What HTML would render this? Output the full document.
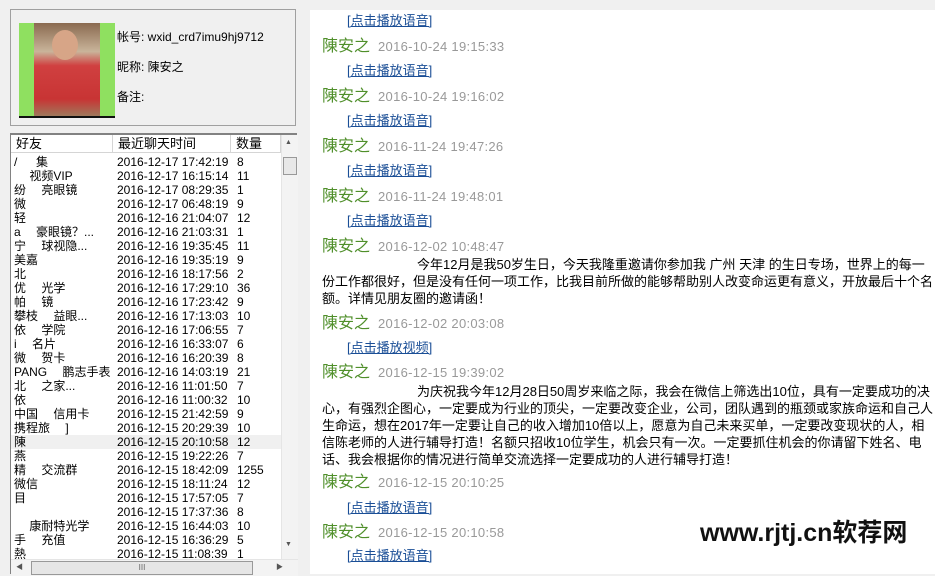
<!DOCTYPE html>
<html><head><meta charset="utf-8"><style>
*{margin:0;padding:0;box-sizing:border-box}
body{width:935px;height:574px;background:#f0f0f0;position:relative;overflow:hidden;font-family:"Liberation Sans","SimSun","Noto Sans CJK SC",sans-serif;font-size:12px;color:#000}
.a{position:absolute;white-space:nowrap}
.box{position:absolute;left:10px;top:9px;width:286px;height:117px;border:1px solid #a0a0a0;background:#f0f0f0}
.list{position:absolute;left:10px;top:133px;width:287px;height:441px;background:#fff;border-top:2px solid #828282;border-left:1px solid #828282}
.hdr{position:absolute;top:0;height:18px;border-right:1px solid #d5d5d5;border-bottom:1px solid #d5d5d5;background:#fff;font-size:13px;padding-left:5px;line-height:18px}
.row{position:absolute;left:0;width:270px;height:14px;font-size:12px;line-height:14px}
.row span{position:absolute}
.right{position:absolute;left:310px;top:10px;width:625px;height:564px;background:#fff;overflow:hidden}
.lk{position:absolute;left:37px;color:#1a4e96;text-decoration:underline;font-size:13px;white-space:nowrap}
.nm{position:absolute;left:12px;color:#4f8f2a;font-size:16px;white-space:nowrap}
.nm span{color:#999;font-size:13px;margin-left:8px;letter-spacing:.3px}
.tx{position:absolute;left:12px;width:614px;font-size:13px;line-height:17px;color:#000;text-indent:95px;word-break:break-all}
</style></head><body>
<div class="box"></div>
<div class="a" style="left:19px;top:23px;width:96px;height:95px;background:#8fe060"></div>
<div class="a" style="left:34px;top:23px;width:66px;height:95px;background:linear-gradient(180deg,#8a6a50 0%,#c9b49a 30%,#d04040 45%,#c83434 80%,#9a8060 100%)"></div>
<div class="a" style="left:52px;top:30px;width:26px;height:30px;border-radius:50%;background:#d7a587"></div>
<div class="a" style="left:19px;top:116px;width:96px;height:2px;background:#111"></div>
<div class="a" style="left:117px;top:28px;font-size:12px">帐号: wxid_crd7imu9hj9712</div>
<div class="a" style="left:117px;top:58px;font-size:12px">昵称: 陳安之</div>
<div class="a" style="left:117px;top:88px;font-size:12px">备注:</div>

<div class="list">
<div class="hdr" style="left:0;width:102px">好友</div>
<div class="hdr" style="left:102px;width:118px">最近聊天时间</div>
<div class="hdr" style="left:220px;width:50px">数量</div>
<div id="rows"></div>
<div class="a" style="left:270px;top:0;width:17px;height:424px;background:#f3f3f3;border-left:1px solid #e5e5e5"></div>
<div class="a" style="left:274px;top:4px;font-size:7px;color:#555">▲</div>
<div class="a" style="left:272px;top:22px;width:14px;height:18px;background:#e8e8e8;border:1px solid #999"></div>
<div class="a" style="left:274px;top:406px;font-size:7px;color:#555">▼</div>
<div class="a" style="left:0;top:424px;width:287px;height:17px;background:#f3f3f3;border-top:1px solid #e5e5e5"></div>
<div class="a" style="left:5px;top:427px;font-size:7px;color:#555">◀</div>
<div class="a" style="left:20px;top:426px;width:222px;height:14px;background:#e6e6e6;border:1px solid #999;text-align:center;font-size:8px;color:#666;line-height:12px">III</div>
<div class="a" style="left:265px;top:427px;font-size:7px;color:#555">▶</div>
</div>

<div class="right">
<div class="lk" style="top:0">[点击播放语音]</div>
<div class="nm" style="top:22px">陳安之<span>2016-10-24 19:15:33</span></div>
<div class="lk" style="top:50px">[点击播放语音]</div>
<div class="nm" style="top:72px">陳安之<span>2016-10-24 19:16:02</span></div>
<div class="lk" style="top:100px">[点击播放语音]</div>
<div class="nm" style="top:122px">陳安之<span>2016-11-24 19:47:26</span></div>
<div class="lk" style="top:150px">[点击播放语音]</div>
<div class="nm" style="top:172px">陳安之<span>2016-11-24 19:48:01</span></div>
<div class="lk" style="top:200px">[点击播放语音]</div>
<div class="nm" style="top:222px">陳安之<span>2016-12-02 10:48:47</span></div>
<div class="tx" style="top:246px">今年12月是我50岁生日，今天我隆重邀请你参加我 广州 天津 的生日专场，世界上的每一份工作都很好，但是没有任何一项工作，比我目前所做的能够帮助别人改变命运更有意义，开放最后十个名额。详情见朋友圈的邀请函！</div>
<div class="nm" style="top:299px">陳安之<span>2016-12-02 20:03:08</span></div>
<div class="lk" style="top:327px">[点击播放视频]</div>
<div class="nm" style="top:348px">陳安之<span>2016-12-15 19:39:02</span></div>
<div class="tx" style="top:373px">为庆祝我今年12月28日50周岁来临之际，我会在微信上筛选出10位，具有一定要成功的决心，有强烈企图心，一定要成为行业的顶尖，一定要改变企业，公司，团队遇到的瓶颈或家族命运和自己人生命运，想在2017年一定要让自己的收入增加10倍以上，愿意为自己未来买单，一定要改变现状的人，相信陈老师的人进行辅导打造！名额只招收10位学生，机会只有一次。一定要抓住机会的你请留下姓名、电话、我会根据你的情况进行简单交流选择一定要成功的人进行辅导打造！</div>
<div class="nm" style="top:458px">陳安之<span>2016-12-15 20:10:25</span></div>
<div class="lk" style="top:487px">[点击播放语音]</div>
<div class="nm" style="top:508px">陳安之<span>2016-12-15 20:10:58</span></div>
<div class="lk" style="top:535px">[点击播放语音]</div>
<div class="a" style="left:390px;top:503px;font-size:25px;font-weight:bold;color:#111;font-family:'Liberation Sans','Noto Sans CJK SC',sans-serif">www.rjtj.cn软荐网</div>
</div>

<script>
var d=[["/ 　 集","2016-12-17 17:42:19","8"],["　 视频VIP","2016-12-17 16:15:14","11"],["纷 　亮眼镜","2016-12-17 08:29:35","1"],["微","2016-12-17 06:48:19","9"],["轻","2016-12-16 21:04:07","12"],["a 　豪眼镜？...","2016-12-16 21:03:31","1"],["宁 　球视隐...","2016-12-16 19:35:45","11"],["美嘉","2016-12-16 19:35:19","9"],["北","2016-12-16 18:17:56","2"],["优 　光学","2016-12-16 17:29:10","36"],["帕 　镜","2016-12-16 17:23:42","9"],["攀枝 　益眼...","2016-12-16 17:13:03","10"],["依 　学院","2016-12-16 17:06:55","7"],["i 　名片","2016-12-16 16:33:07","6"],["微 　贺卡","2016-12-16 16:20:39","8"],["PANG 　鹏志手表","2016-12-16 14:03:19","21"],["北 　之家...","2016-12-16 11:01:50","7"],["依","2016-12-16 11:00:32","10"],["中国 　信用卡","2016-12-15 21:42:59","9"],["携程旅 　]","2016-12-15 20:29:39","10"],["陳","2016-12-15 20:10:58","12"],["燕","2016-12-15 19:22:26","7"],["精 　交流群","2016-12-15 18:42:09","1255"],["微信","2016-12-15 18:11:24","12"],["目","2016-12-15 17:57:05","7"],["","2016-12-15 17:37:36","8"],["　 康耐特光学","2016-12-15 16:44:03","10"],["手 　充值","2016-12-15 16:36:29","5"],["熱","2016-12-15 11:08:39","1"]];
var h="";d.forEach(function(r,i){h+='<div class="row" style="top:'+(20+i*14)+'px;'+(i==20?'background:#f0f0f0;':'')+'"><span style="left:3px">'+r[0]+'</span><span style="left:106px">'+r[1]+'</span><span style="left:226px">'+r[2]+'</span></div>'});
document.getElementById("rows").innerHTML=h;
</script>
</body></html>
